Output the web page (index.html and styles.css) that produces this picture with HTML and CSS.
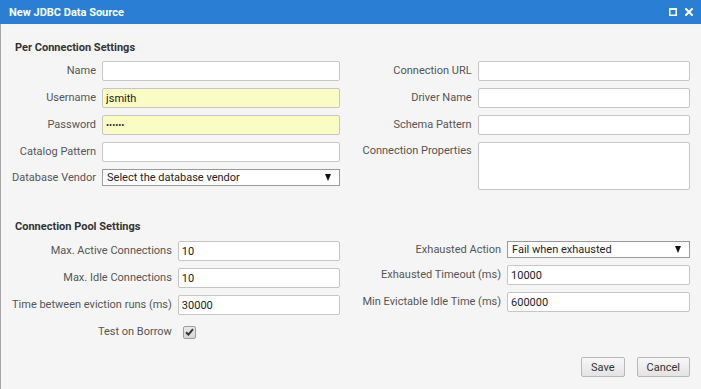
FILE: index.html
```html
<!DOCTYPE html>
<html lang="en">
<head>
    <meta charset="UTF-8">
    <meta name="viewport" content="width=device-width, initial-scale=1.0">
    <title>New JDBC Data Source</title>
    <link rel="stylesheet" href="styles.css">
</head>
<body>
    <div class="dialog">
        <div class="titlebar">
            <span class="title">New JDBC Data Source</span>
            <div class="title-tools">
                <svg class="tool" width="8" height="8" viewBox="0 0 8 8">
                    <rect x="0.75" y="0.75" width="6.5" height="6.5" fill="none" stroke="#fff" stroke-width="1.5"/>
                    <rect x="0" y="0" width="8" height="2" fill="#fff"/>
                </svg>
                <svg class="tool" width="8" height="8" viewBox="0 0 8 8">
                    <path d="M1 1 L7 7 M7 1 L1 7" stroke="#fff" stroke-width="2" stroke-linecap="square"/>
                </svg>
            </div>
        </div>

        <div class="dialog-body">
            <h3 class="section-title">Per Connection Settings</h3>
            <div class="section-cols">
                <div class="form-col">
                    <label>Name</label>
                    <input type="text">
                    <label>Username</label>
                    <input type="text" class="filled" value="jsmith">
                    <label>Password</label>
                    <input type="password" class="filled pass" value="secret">
                    <label>Catalog Pattern</label>
                    <input type="text">
                    <label class="short">Database Vendor</label>
                    <div class="select-wrap">
                        <select>
                            <option>Select the database vendor</option>
                        </select>
                    </div>
                </div>
                <div class="form-col">
                    <label>Connection URL</label>
                    <input type="text">
                    <label>Driver Name</label>
                    <input type="text">
                    <label>Schema Pattern</label>
                    <input type="text">
                    <label class="top">Connection Properties</label>
                    <textarea></textarea>
                </div>
            </div>

            <h3 class="section-title second">Connection Pool Settings</h3>
            <div class="section-cols">
                <div class="form-col">
                    <label>Max. Active Connections</label>
                    <input type="text" value="10">
                    <label>Max. Idle Connections</label>
                    <input type="text" value="10">
                    <label>Time between eviction runs (ms)</label>
                    <input type="text" value="30000">
                    <label>Test on Borrow</label>
                    <span class="checkbox">
                        <svg width="9" height="8" viewBox="0 0 9 8">
                            <path d="M1 4.2 L3.4 6.6 L8 1.2" fill="none" stroke="#333" stroke-width="2"/>
                        </svg>
                    </span>
                </div>
                <div class="form-col">
                    <label class="short">Exhausted Action</label>
                    <div class="select-wrap">
                        <select>
                            <option>Fail when exhausted</option>
                        </select>
                    </div>
                    <label>Exhausted Timeout (ms)</label>
                    <input type="text" value="10000">
                    <label>Min Evictable Idle Time (ms)</label>
                    <input type="text" value="600000">
                </div>
            </div>

            <div class="footer">
                <button class="btn">Save</button>
                <button class="btn">Cancel</button>
            </div>
        </div>
    </div>
</body>
</html>
```

FILE: styles.css
```css
* {
    box-sizing: border-box;
}

body {
    margin: 0;
    font-family: Roboto, "Liberation Sans", Arial, sans-serif;
    font-size: 11px;
    color: #555;
    background: #f5f5f5;
}

.dialog {
    height: 389px;
    display: flex;
    flex-direction: column;
}

.titlebar {
    height: 24px;
    background: #2a7fd5;
    display: flex;
    align-items: center;
    justify-content: space-between;
    padding: 0 8px 0 9px;
}

.title {
    color: #fff;
    font-weight: bold;
    font-size: 11px;
}

.title-tools {
    display: flex;
    align-items: center;
    gap: 8px;
}

.tool {
    display: block;
}

.dialog-body {
    flex: 1;
    border-left: 1px solid #a6a6a6;
    padding: 0 11px 0 11px;
}

.section-title {
    margin: 16px 0 5px 3px;
    font-size: 11px;
    line-height: 16px;
    font-weight: bold;
    color: #333;
}

.section-title.second {
    margin-top: 29px;
    margin-bottom: 6px;
}

.section-cols {
    display: grid;
    grid-template-columns: 1fr 1fr;
    column-gap: 23px;
    align-items: start;
}

.form-col {
    display: grid;
    grid-template-columns: auto 1fr;
    column-gap: 6px;
    row-gap: 7px;
    align-items: center;
}

.form-col label {
    text-align: right;
    white-space: nowrap;
    line-height: 20px;
}

.form-col label.short {
    line-height: 17px;
}

.form-col label.top {
    align-self: start;
    line-height: 17px;
}

input[type="text"],
input[type="password"],
textarea {
    height: 20px;
    width: 100%;
    border: 1px solid #c6c6c6;
    border-radius: 2px;
    background: #fff;
    font-family: inherit;
    font-size: 11px;
    color: #222;
    padding: 0 3px;
    margin: 0;
    outline: none;
}

input.filled {
    background: #fafcc4;
}

input.pass {
    font-size: 9px;
}

textarea {
    height: 48px;
    resize: none;
}

.select-wrap {
    position: relative;
    height: 17px;
}

.select-wrap select {
    appearance: none;
    -webkit-appearance: none;
    width: 100%;
    height: 17px;
    border: 1px solid #9a9a9a;
    border-radius: 0;
    background: #fff;
    font-family: inherit;
    font-size: 11px;
    color: #222;
    padding: 0 20px 0 4px;
    margin: 0;
    outline: none;
}

.select-wrap::after {
    content: "";
    position: absolute;
    right: 9px;
    top: 5px;
    border-left: 3.5px solid transparent;
    border-right: 3.5px solid transparent;
    border-top: 7px solid #111;
    pointer-events: none;
}

.checkbox {
    width: 13px;
    height: 13px;
    margin-left: 5px;
    border: 1px solid #9c9c9c;
    border-radius: 2px;
    background: linear-gradient(#e9e9e9, #d6d6d6);
    display: flex;
    align-items: center;
    justify-content: center;
}

.checkbox svg {
    display: block;
}

.footer {
    display: flex;
    justify-content: flex-end;
    gap: 12px;
    margin-top: 15px;
}

.btn {
    height: 20px;
    padding: 0 9px;
    border: 1px solid #b8b8b8;
    border-radius: 2px;
    background: linear-gradient(#f7f7f7, #e3e3e3);
    font-family: inherit;
    font-size: 11px;
    color: #333;
    cursor: pointer;
}

.btn:hover {
    background: linear-gradient(#fff, #ebebeb);
}
```
